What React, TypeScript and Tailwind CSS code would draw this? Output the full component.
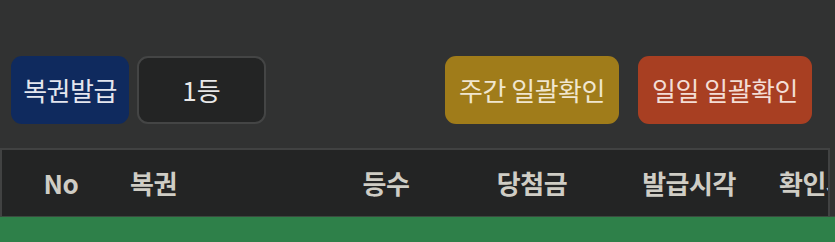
import React from "react";

const font = { fontFamily: '"Noto Sans CJK KR", "Noto Sans", sans-serif' };

const columns = [
  { label: "No", className: "w-[118px] justify-center" },
  { label: "복권", className: "w-[192px] justify-start pl-[10px]" },
  { label: "등수", className: "w-[148px] justify-center" },
  { label: "당첨금", className: "w-[144px] justify-center" },
  { label: "발급시각", className: "w-[170px] justify-center" },
  { label: "확인시각", className: "w-[120px] justify-start pl-[5px]" },
];

export default function App() {
  return (
    <div className="w-[835px] h-[242px] overflow-hidden bg-[#313232] flex flex-col" style={font}>
      {/* Toolbar */}
      <div className="flex items-center h-[68px] mt-[56px] px-[11px]">
        <button className="h-[68px] w-[118px] rounded-[11px] bg-[#0f2a5e] text-[#e4e6ee] text-[26px] leading-none tracking-[-0.5px]">
          복권발급
        </button>
        <div className="ml-[8px] h-[68px] w-[129px] rounded-[11px] bg-[#232424] border-2 border-[#444545] flex items-center justify-center text-[#e8e8e8] text-[26px] leading-none">
          1등
        </div>
        <div className="flex-1" />
        <button className="h-[68px] w-[174px] rounded-[11px] bg-[#a07c1a] text-[#f0e6cf] text-[26px] leading-none tracking-[-0.5px]">
          주간 일괄확인
        </button>
        <button className="ml-[19px] mr-[12px] h-[68px] w-[174px] rounded-[11px] bg-[#a83f22] text-[#f3ddd5] text-[26px] leading-none tracking-[-0.5px]">
          일일 일괄확인
        </button>
      </div>

      {/* Table */}
      <div className="mt-[24px] w-[830px] border-t-2 border-l-2 border-r-2 border-[#414242] bg-[#232424] h-[68px] flex overflow-hidden">
        {columns.map((c) => (
          <div
            key={c.label}
            className={`shrink-0 flex items-center h-full text-[26px] font-bold text-[#cfcdc5] leading-none whitespace-nowrap tracking-[-0.5px] ${c.className}`}
          >
            {c.label}
          </div>
        ))}
      </div>
      <div className="h-[1px] bg-[#3b4a3f]" />
      <div className="flex-1 bg-[#2e8049]" />
    </div>
  );
}
